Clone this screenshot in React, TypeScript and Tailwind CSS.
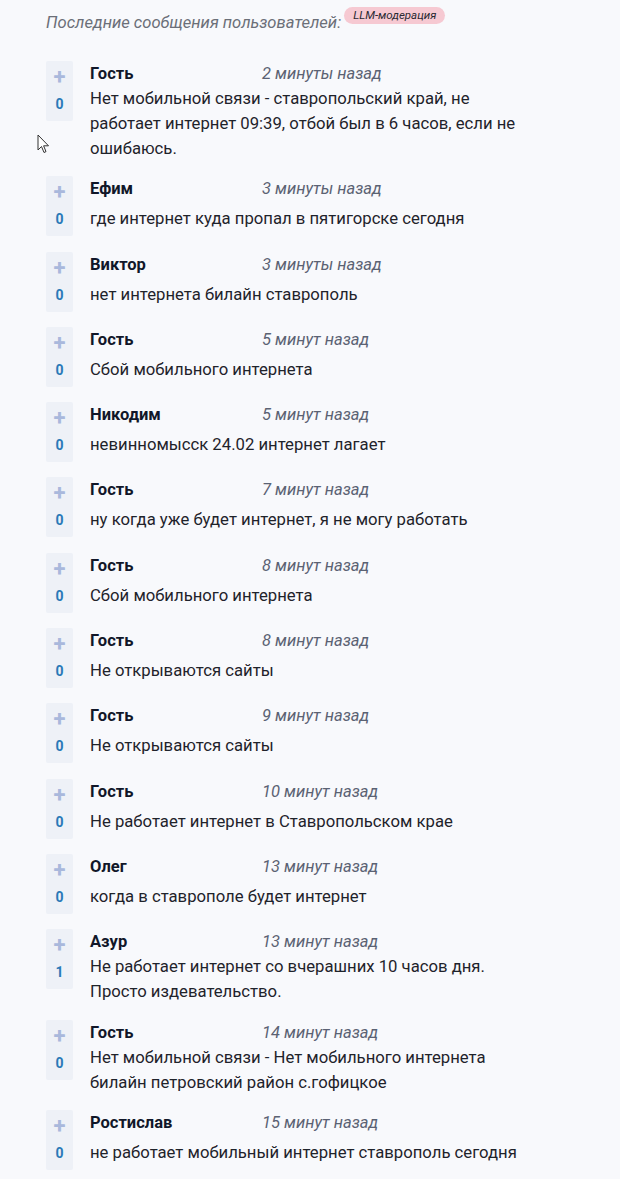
import React from "react";

type Msg = { name: string; time: string; text: string; votes: number };

const msgs: Msg[] = [
  { name: "Гость", time: "2 минуты назад", text: "Нет мобильной связи - ставропольский край, не работает интернет 09:39, отбой был в 6 часов, если не ошибаюсь.", votes: 0 },
  { name: "Ефим", time: "3 минуты назад", text: "где интернет куда пропал в пятигорске сегодня", votes: 0 },
  { name: "Виктор", time: "3 минуты назад", text: "нет интернета билайн ставрополь", votes: 0 },
  { name: "Гость", time: "5 минут назад", text: "Сбой мобильного интернета", votes: 0 },
  { name: "Никодим", time: "5 минут назад", text: "невинномысск 24.02 интернет лагает", votes: 0 },
  { name: "Гость", time: "7 минут назад", text: "ну когда уже будет интернет, я не могу работать", votes: 0 },
  { name: "Гость", time: "8 минут назад", text: "Сбой мобильного интернета", votes: 0 },
  { name: "Гость", time: "8 минут назад", text: "Не открываются сайты", votes: 0 },
  { name: "Гость", time: "9 минут назад", text: "Не открываются сайты", votes: 0 },
  { name: "Гость", time: "10 минут назад", text: "Не работает интернет в Ставропольском крае", votes: 0 },
  { name: "Олег", time: "13 минут назад", text: "когда в ставрополе будет интернет", votes: 0 },
  { name: "Азур", time: "13 минут назад", text: "Не работает интернет со вчерашних 10 часов дня. Просто издевательство.", votes: 1 },
  { name: "Гость", time: "14 минут назад", text: "Нет мобильной связи - Нет мобильного интернета билайн петровский район с.гофицкое", votes: 0 },
  { name: "Ростислав", time: "15 минут назад", text: "не работает мобильный интернет ставрополь сегодня", votes: 0 },
];

function Row({ m }: { m: Msg }) {
  return (
    <div className="grid grid-cols-[27px_440px] grid-rows-[auto_auto] gap-x-[17px] mb-[15.3px]">
      <div className="row-span-2 h-[60px] w-[27px] bg-[#eef1f7] rounded-[2px] flex flex-col items-center">
        <span className="mt-[5px] text-[22px] leading-[22px] font-bold text-[#a9b8dc]">+</span>
        <span className="mt-[9px] text-[14px] leading-[15px] font-bold text-[#2a7ab8]">{m.votes}</span>
      </div>
      <div className="flex items-start leading-[25px]">
        <span className="w-[172px] text-[16.5px] font-bold text-[#111729]">{m.name}</span>
        <span className="text-[16.5px] italic text-[#5b6273]">{m.time}</span>
      </div>
      <div className="text-[16.7px] leading-[25px] text-[#1f232b] self-start">{m.text}</div>
    </div>
  );
}

export default function App() {
  return (
    <div
      className="relative min-h-[1179px] w-[620px] bg-[#f8f9fc] pl-[46px] pt-[10px]"
      style={{ fontFamily: "Roboto, 'Noto Sans', sans-serif" }}
    >
      <div className="flex items-start h-[51px]">
        <span className="mt-[1px] text-[16.6px] leading-[24px] italic text-[#6b6f78]">
          Последние сообщения пользователей:
        </span>
        <span className="ml-[3px] -mt-[3px] rounded-full bg-[#f6c9d2] px-[9px] text-[11.5px] leading-[17px] italic text-[#2a2a33]">
          LLM-модерация
        </span>
      </div>
      <div className="flex flex-col">
        {msgs.map((m, i) => (
          <Row key={i} m={m} />
        ))}
      </div>
      <svg
        className="absolute left-[37px] top-[134px]"
        width="14"
        height="21"
        viewBox="0 0 14 21"
      >
        <path d="M1 1 L1 16 L4.5 12.5 L7 18.5 L9 17.6 L6.6 11.8 L11.5 11.8 Z" fill="#fff" stroke="#333" strokeWidth="1" strokeLinejoin="round" />
      </svg>
    </div>
  );
}
